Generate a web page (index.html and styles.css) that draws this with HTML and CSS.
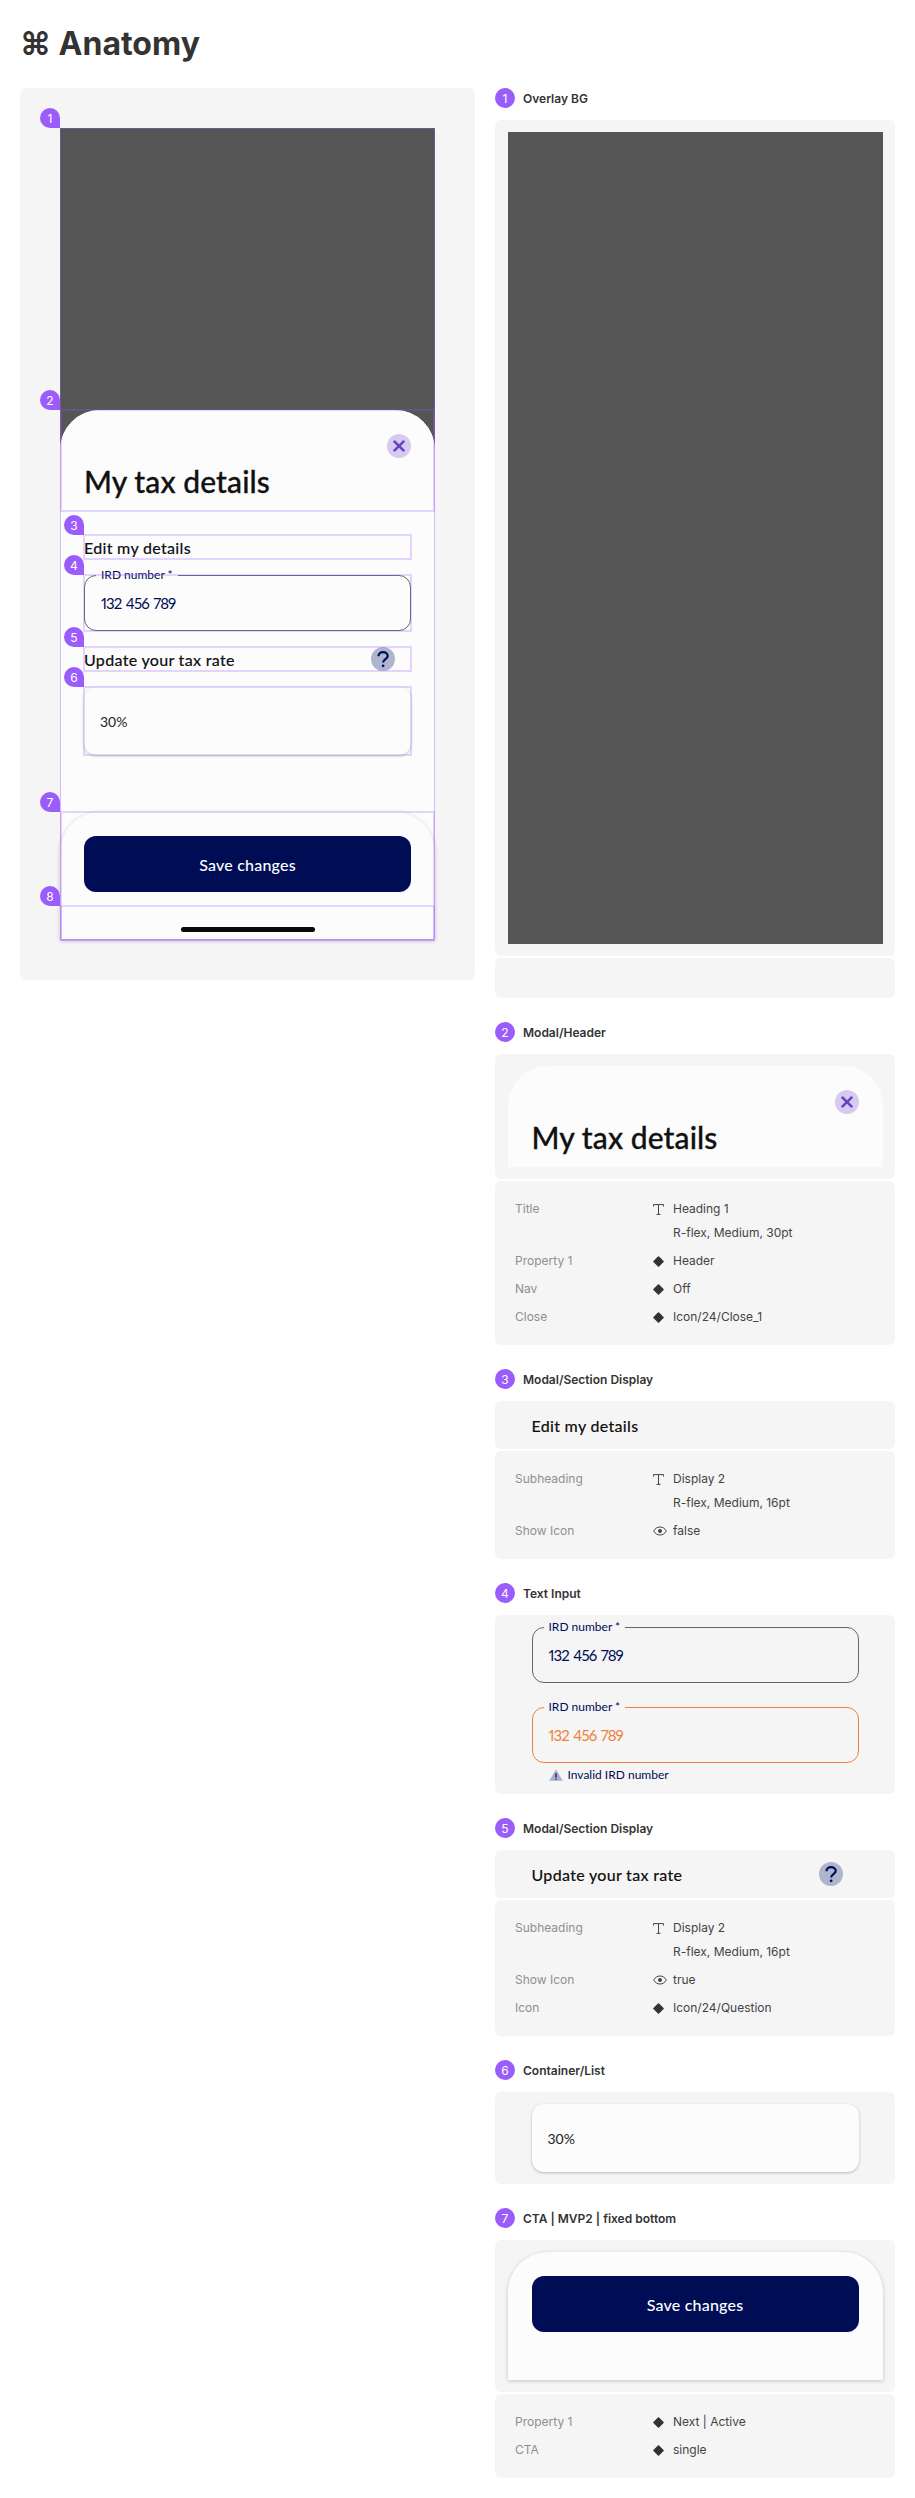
FILE: index.html
```html
<!DOCTYPE html>
<html lang="en">
<head>
  <meta charset="UTF-8" />
  <title>Anatomy</title>
  <link rel="stylesheet" href="styles.css">
</head>
<body>

  <svg class="defs" aria-hidden="true">
    <symbol id="i-close" viewBox="0 0 24 24">
      <circle cx="12" cy="12" r="12" fill="#d6cbee"/>
      <path d="M6.8 6.8l10.4 10.4M17.2 6.8L6.8 17.2" stroke="#6645c6" stroke-width="2.6" fill="none"/>
    </symbol>
    <symbol id="i-question" viewBox="0 0 24 24">
      <circle cx="12" cy="12" r="12" fill="#b0b5cf"/>
      <path d="M7.400 9.200c0-2.400 2-4.100 4.700-4.100s4.600 1.700 4.600 3.900c0 3.200-4.600 3.100-4.600 6.500" stroke="#000d55" stroke-width="2.200" fill="none"/>
      <circle cx="12.100" cy="18.800" r="1.400" fill="#000d55"/>
    </symbol>
    <symbol id="i-text" viewBox="0 0 11 11">
      <path d="M.5 2.500V.6h10v1.900M5.500.6v9.800M3.500 10.400h4" stroke="#444" stroke-width="1" fill="none"/>
    </symbol>
    <symbol id="i-variant" viewBox="0 0 11 11">
      <path d="M5.500 1l4.500 4.500-4.500 4.500L1 5.500z" fill="#333" stroke="#333" stroke-width="1.600" stroke-linejoin="round"/>
    </symbol>
    <symbol id="i-eye" viewBox="0 0 14 10">
      <path d="M.7 5C2.200 2.300 4.400 1 7 1s4.800 1.300 6.300 4C11.800 7.700 9.600 9 7 9S2.200 7.700.7 5z" stroke="#444" stroke-width="1" fill="none"/>
      <circle cx="7" cy="5" r="2" fill="#444"/>
    </symbol>
    <symbol id="i-warn" viewBox="0 0 14 12">
      <path d="M7 .5l6.800 11.300H.2z" fill="#a9aecb"/>
      <path d="M7 4.200v4.300M7 9.400v1.300" stroke="#000d55" stroke-width="1.200"/>
    </symbol>
  </svg>

  <h1>⌘ Anatomy</h1>

  <div class="layout">

    <!-- Annotated screen -->
    <div class="panel">
      <div class="phone anno">
        <span class="badge corner">1</span>
        <div class="sheet">
          <div class="modal-header anno">
            <span class="badge corner">2</span>
            <svg class="icon-24 close"><use href="#i-close"/></svg>
            <div class="modal-title">My tax details</div>
          </div>

          <div class="sheet-body">
            <div class="subheading anno light">
              <span class="badge corner">3</span>
              Edit my details
            </div>

            <div class="text-input anno light">
              <span class="badge corner">4</span>
              <fieldset>
                <legend>IRD number *</legend>
                <span class="input-value">132 456 789</span>
              </fieldset>
            </div>

            <div class="subheading anno light">
              <span class="badge corner">5</span>
              Update your tax rate
              <svg class="icon-24 help"><use href="#i-question"/></svg>
            </div>

            <div class="list-item anno light">
              <span class="badge corner">6</span>
              30%
            </div>
          </div>

          <div class="cta anno">
            <span class="badge corner">7</span>
            <button class="cta-button">Save changes</button>
            <div class="home-area anno">
              <span class="badge corner">8</span>
              <span class="home-bar"></span>
            </div>
          </div>
        </div>
      </div>
    </div>

    <!-- Component notes -->
    <div class="notes">

      <section class="note">
        <div class="note-title"><span class="badge">1</span>Overlay BG</div>
        <div class="card">
          <div class="frame overlay"></div>
        </div>
        <div class="card empty"></div>
      </section>

      <section class="note">
        <div class="note-title"><span class="badge">2</span>Modal/Header</div>
        <div class="card">
          <div class="frame">
            <div class="modal-header">
              <svg class="icon-24 close"><use href="#i-close"/></svg>
              <div class="modal-title">My tax details</div>
            </div>
          </div>
        </div>
        <div class="card props">
          <div class="prop">
            <span class="prop-name">Title</span>
            <svg class="prop-icon"><use href="#i-text"/></svg>
            <span>Heading 1<br><span class="prop-sub">R-flex, Medium, 30pt</span></span>
          </div>
          <div class="prop">
            <span class="prop-name">Property 1</span>
            <svg class="prop-icon"><use href="#i-variant"/></svg>
            <span>Header</span>
          </div>
          <div class="prop">
            <span class="prop-name">Nav</span>
            <svg class="prop-icon"><use href="#i-variant"/></svg>
            <span>Off</span>
          </div>
          <div class="prop">
            <span class="prop-name">Close</span>
            <svg class="prop-icon"><use href="#i-variant"/></svg>
            <span>Icon/24/Close_1</span>
          </div>
        </div>
      </section>

      <section class="note">
        <div class="note-title"><span class="badge">3</span>Modal/Section Display</div>
        <div class="card">
          <div class="frame inset">
            <div class="subheading">Edit my details</div>
          </div>
        </div>
        <div class="card props">
          <div class="prop">
            <span class="prop-name">Subheading</span>
            <svg class="prop-icon"><use href="#i-text"/></svg>
            <span>Display 2<br><span class="prop-sub">R-flex, Medium, 16pt</span></span>
          </div>
          <div class="prop">
            <span class="prop-name">Show Icon</span>
            <svg class="prop-icon eye"><use href="#i-eye"/></svg>
            <span>false</span>
          </div>
        </div>
      </section>

      <section class="note">
        <div class="note-title"><span class="badge">4</span>Text Input</div>
        <div class="card">
          <div class="frame inset">
            <div class="text-input">
              <fieldset>
                <legend>IRD number *</legend>
                <span class="input-value">132 456 789</span>
              </fieldset>
            </div>
            <div class="text-input error">
              <fieldset>
                <legend>IRD number *</legend>
                <span class="input-value">132 456 789</span>
              </fieldset>
            </div>
            <div class="input-error">
              <svg class="warn"><use href="#i-warn"/></svg>
              Invalid IRD number
            </div>
          </div>
        </div>
      </section>

      <section class="note">
        <div class="note-title"><span class="badge">5</span>Modal/Section Display</div>
        <div class="card">
          <div class="frame inset">
            <div class="subheading">
              Update your tax rate
              <svg class="icon-24 help"><use href="#i-question"/></svg>
            </div>
          </div>
        </div>
        <div class="card props">
          <div class="prop">
            <span class="prop-name">Subheading</span>
            <svg class="prop-icon"><use href="#i-text"/></svg>
            <span>Display 2<br><span class="prop-sub">R-flex, Medium, 16pt</span></span>
          </div>
          <div class="prop">
            <span class="prop-name">Show Icon</span>
            <svg class="prop-icon eye"><use href="#i-eye"/></svg>
            <span>true</span>
          </div>
          <div class="prop">
            <span class="prop-name">Icon</span>
            <svg class="prop-icon"><use href="#i-variant"/></svg>
            <span>Icon/24/Question</span>
          </div>
        </div>
      </section>

      <section class="note">
        <div class="note-title"><span class="badge">6</span>Container/List</div>
        <div class="card">
          <div class="frame inset">
            <div class="list-item">30%</div>
          </div>
        </div>
      </section>

      <section class="note">
        <div class="note-title"><span class="badge">7</span>CTA | MVP2 | fixed bottom</div>
        <div class="card">
          <div class="frame">
            <div class="cta">
              <button class="cta-button">Save changes</button>
              <div class="home-area"></div>
            </div>
          </div>
        </div>
        <div class="card props">
          <div class="prop">
            <span class="prop-name">Property 1</span>
            <svg class="prop-icon"><use href="#i-variant"/></svg>
            <span>Next | Active</span>
          </div>
          <div class="prop">
            <span class="prop-name">CTA</span>
            <svg class="prop-icon"><use href="#i-variant"/></svg>
            <span>single</span>
          </div>
        </div>
      </section>

    </div>
  </div>

</body>
</html>
```

FILE: styles.css
```css
body {
  margin: 0;
  padding: 24px 20px 20px;
  font-family: 'Inter', sans-serif;
  background: #fff;
  color: #333;
}

.defs {
  display: none;
}

h1 {
  margin: 0 0 24px;
  font-size: 32px;
  line-height: 40px;
  font-weight: 700;
  color: #333;
}

.layout {
  display: grid;
  grid-template-columns: 455px 400px;
  gap: 20px;
  align-items: start;
}

/* left panel */
.panel {
  background: #f5f5f5;
  border-radius: 6px;
  padding: 40px;
}

.phone {
  display: flex;
  height: 812px;
  background: #555;
}

.sheet {
  flex: 1;
  display: flex;
  flex-direction: column;
  margin-top: 282px;
  background: #fcfcfc;
  border-radius: 40px 40px 0 0;
}

.sheet-body {
  flex: 1;
  display: flex;
  flex-direction: column;
  gap: 16px;
  padding: 24px 24px 0;
}

/* annotation outlines and badges */
.anno {
  position: relative;
}

.anno::after {
  content: "";
  position: absolute;
  inset: -1px;
  border: 2px solid rgba(151, 87, 255, 0.25);
  pointer-events: none;
}

.phone.anno::after {
  inset: 0;
  border-width: 1px;
  border-color: rgba(151, 87, 255, 0.4);
}

.modal-header.anno::after,
.cta.anno::after,
.home-area.anno::after {
  inset: -1px 0;
}

.badge {
  display: flex;
  align-items: center;
  justify-content: center;
  flex: none;
  width: 20px;
  height: 20px;
  border-radius: 50%;
  background: #9a5cfb;
  color: #fff;
  font-family: 'Inter', sans-serif;
  font-size: 12px;
  font-weight: 400;
  letter-spacing: 0;
  -webkit-text-stroke: 0;
}

.badge.corner {
  position: absolute;
  left: -20px;
  top: -20px;
  z-index: 2;
  border-radius: 50% 50% 0 50%;
}

/* shared pieces of the modal */
.modal-header {
  display: flex;
  flex-direction: column;
  padding: 24px 24px 12px;
  background: #fcfcfc;
  border-radius: 40px 40px 0 0;
}

.icon-24 {
  display: block;
  width: 24px;
  height: 24px;
}

.close {
  align-self: flex-end;
}

.modal-title {
  margin-top: 5px;
  font-family: 'Lato', sans-serif;
  font-size: 30px;
  line-height: 36px;
  font-weight: 500;
  letter-spacing: 0.1px;
  -webkit-text-stroke: 0.3px #111;
  color: #111;
}

.subheading {
  display: flex;
  align-items: center;
  justify-content: space-between;
  height: 24px;
  padding-right: 16px;
  font-family: 'Lato', sans-serif;
  font-size: 16px;
  font-weight: 500;
  letter-spacing: 0.3px;
  -webkit-text-stroke: 0.1px #111;
  color: #111;
}

.text-input {
  display: flow-root;
  height: 56px;
  font-family: 'Lato', sans-serif;
  color: #000d55;
}

.text-input fieldset {
  box-sizing: border-box;
  height: 63px;
  margin: -7px 0 0;
  padding: 0 16px;
  border: 1px solid #666;
  border-radius: 12px;
  line-height: 41px;
}

.text-input legend {
  margin-left: -5px;
  padding: 0 5px;
  font-size: 12px;
  line-height: 14px;
}

.input-value {
  font-size: 15px;
  letter-spacing: -0.9px;
  word-spacing: 1.5px;
  font-variant-numeric: proportional-nums;
}

.text-input.error {
  margin-top: 24px;
}

.text-input.error fieldset {
  border-color: #f0803c;
}

.text-input.error .input-value {
  color: #f0803c;
}

.input-error {
  display: flex;
  align-items: center;
  gap: 5px;
  height: 15px;
  margin-top: 4px;
  padding-left: 17px;
  font-family: 'Lato', sans-serif;
  font-size: 12px;
  color: #000d55;
}

.warn {
  width: 14px;
  height: 12px;
}

.list-item {
  display: flex;
  align-items: center;
  height: 68px;
  padding: 0 16px;
  background: #fcfcfc;
  border-radius: 12px;
  box-shadow: 0 1px 3px rgba(0, 0, 0, 0.25);
  font-family: 'Lato', sans-serif;
  font-size: 14px;
  color: #222;
}

.cta {
  padding: 24px 24px 0;
  background: #fcfcfc;
  border-radius: 40px 40px 0 0;
  box-shadow: 0 1px 4px rgba(0, 0, 0, 0.2);
}

.cta-button {
  display: block;
  width: 100%;
  height: 56px;
  border: none;
  border-radius: 12px;
  background: #000d55;
  color: #fff;
  font-family: 'Lato', sans-serif;
  font-size: 16px;
  font-weight: 500;
  letter-spacing: 0.2px;
}

.home-area {
  display: flex;
  justify-content: center;
  align-items: flex-end;
  height: 34px;
  margin: 14px -24px 0;
  padding-bottom: 8px;
  box-sizing: border-box;
}

.home-bar {
  width: 134px;
  height: 5px;
  border-radius: 3px;
  background: #0a0a0a;
}

/* right column */
.notes {
  display: flex;
  flex-direction: column;
  gap: 24px;
}

.note-title {
  display: flex;
  align-items: center;
  gap: 8px;
  margin-bottom: 12px;
  font-size: 12px;
  font-weight: 600;
  color: #333;
}

.card {
  padding: 12px 0;
  background: #f5f5f5;
  border-radius: 6px;
}

.card + .card {
  margin-top: 2px;
}

.card.empty {
  height: 16px;
}

.frame {
  width: 375px;
  margin: 0 auto;
}

.frame.inset {
  box-sizing: border-box;
  padding: 0 24px;
}

.overlay {
  height: 812px;
  background: #555;
}

.card.props {
  display: flex;
  flex-direction: column;
  gap: 8px;
  padding: 18px 20px;
  font-size: 12px;
  line-height: 20px;
  color: #444;
}

.prop {
  display: grid;
  grid-template-columns: 138px 20px 1fr;
}

.prop-name {
  color: #8f8f8f;
}

.prop-icon {
  width: 11px;
  height: 11px;
  margin-top: 5px;
}

.prop-icon.eye {
  width: 14px;
  height: 10px;
  margin-top: 5px;
}

.prop-sub {
  display: block;
  margin-top: 4px;
}
```
